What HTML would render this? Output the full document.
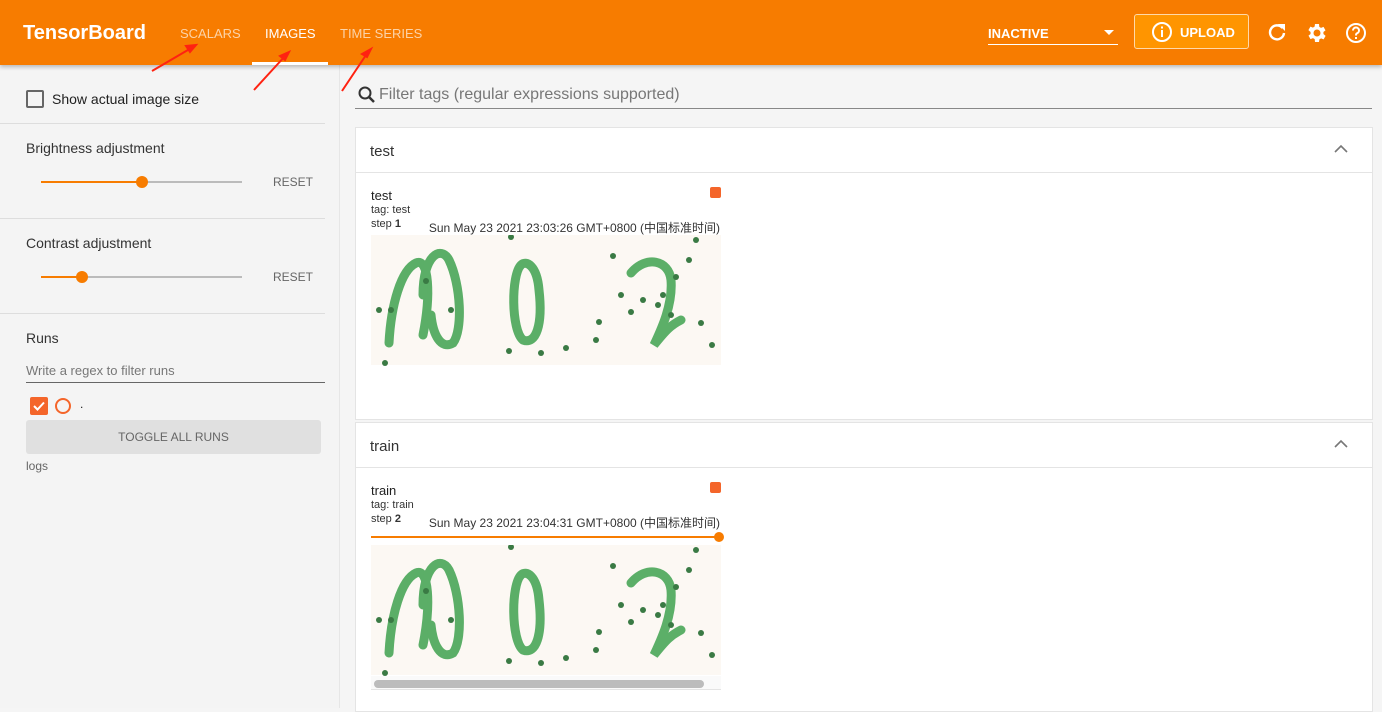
<!DOCTYPE html>
<html><head><meta charset="utf-8"><style>
*{box-sizing:border-box;margin:0;padding:0}
body{width:1382px;height:708px;overflow:hidden;font-family:"Liberation Sans","Noto Sans CJK SC",sans-serif;background:#f5f5f5;color:#212121;position:relative}
.hdr{position:absolute;left:0;top:0;width:1382px;height:65px;background:#f77c00;box-shadow:0 2px 4px rgba(0,0,0,.25);color:#fff;z-index:2}
.abs{position:absolute}
.side{position:absolute;left:0;top:65px;width:340px;height:643px;background:#f4f4f4;border-right:1px solid #e6e6e6}
.hr{position:absolute;left:0;width:325px;height:1px;background:#ddd}
.lbl{font-size:14px;color:#333}
.card{position:absolute;left:355px;width:1018px;background:#fff;border:1px solid #e4e4e4}
.chd{height:45px;border-bottom:1px solid #e4e4e4;font-size:15px;padding:15px 14px;position:relative;color:#333}
.t{font-size:13px}
.s{font-size:11px;color:#333}
.d{font-size:12px;color:#333;white-space:nowrap}
</style></head><body>
<div class="hdr">
 <div class="abs" style="left:23px;top:22px;font-size:20px;font-weight:bold">TensorBoard</div>
 <div class="abs" style="left:180px;top:26px;font-size:13px;color:#fcd3a8">SCALARS</div>
 <div class="abs" style="left:265px;top:26px;font-size:13px">IMAGES</div>
 <div class="abs" style="left:252px;top:62px;width:76px;height:3px;background:#fff"></div>
 <div class="abs" style="left:340px;top:26px;font-size:13px;color:#fcd3a8">TIME SERIES</div>
 <div class="abs" style="left:988px;top:26px;font-size:13px;font-weight:bold">INACTIVE</div>
 <div class="abs" style="left:1104px;top:30px;border-left:5px solid transparent;border-right:5px solid transparent;border-top:5px solid #fff"></div>
 <div class="abs" style="left:988px;top:44px;width:130px;height:1px;background:#fff"></div>
 <div class="abs" style="left:1134px;top:14px;width:115px;height:35px;border:1px solid #ffd9a8;background:#ff9500;border-radius:3px"></div>
 <svg class="abs" style="left:1151px;top:21px" width="22" height="22"><circle cx="11" cy="11" r="9" fill="none" stroke="#fff" stroke-width="2"/><rect x="10" y="9" width="2" height="7" fill="#fff"/><rect x="10" y="5.5" width="2" height="2" fill="#fff"/></svg>
 <div class="abs" style="left:1180px;top:25px;font-size:13px;font-weight:bold">UPLOAD</div>
 <svg class="abs" style="left:1266px;top:21px" width="22" height="22"><path d="M16.5 7A7 7 0 1 0 18 12" fill="none" stroke="#fff" stroke-width="2.4"/><path d="M12 3h7v7z" fill="#fff"/></svg>
 <svg class="abs" style="left:1305px;top:21px" width="24" height="24" viewBox="0 0 24 24"><path fill="#fff" d="M19.4 13a7.5 7.5 0 0 0 0-2l2.1-1.6-2-3.5-2.5 1a7 7 0 0 0-1.7-1L15 3h-4l-.4 2.6a7 7 0 0 0-1.7 1l-2.5-1-2 3.5L6.6 11a7.5 7.5 0 0 0 0 2l-2.1 1.6 2 3.5 2.5-1a7 7 0 0 0 1.7 1L11 21h4l.4-2.6a7 7 0 0 0 1.7-1l2.5 1 2-3.5zM13 15.5a3.5 3.5 0 1 1 0-7 3.5 3.5 0 0 1 0 7z" transform="translate(-1 0)"/></svg>
 <svg class="abs" style="left:1345px;top:22px" width="22" height="22"><circle cx="11" cy="11" r="9" fill="none" stroke="#fff" stroke-width="2"/><path d="M8 8.5a3 3 0 1 1 4 2.8c-1 .4-1 1-1 2.2" fill="none" stroke="#fff" stroke-width="2"/><rect x="10" y="15" width="2" height="2" fill="#fff"/></svg>
</div>
<svg class="abs" style="left:0;top:0;z-index:3" width="460" height="110"><g stroke="#f21" stroke-width="2" fill="#f21"><line x1="152" y1="71" x2="193" y2="47"/><path d="M196 45l-10 1 4 6z"/><line x1="254" y1="90" x2="286" y2="55"/><path d="M289 52l-9 4 5 4z"/><line x1="342" y1="91" x2="368" y2="52"/><path d="M371 49l-9 5 5 3z"/></g></svg>
<div class="side">
 <div class="abs" style="left:26px;top:25px;width:18px;height:18px;border:2px solid #666;border-radius:2px"></div>
 <div class="abs" style="left:52px;top:26px;font-size:14px">Show actual image size</div>
 <div class="hr" style="top:58px"></div>
 <div class="abs lbl" style="left:26px;top:75px">Brightness adjustment</div>
 <div class="abs" style="left:41px;top:116px;width:201px;height:2px;background:#bbb"></div>
 <div class="abs" style="left:41px;top:116px;width:101px;height:2px;background:#f77c00"></div>
 <div class="abs" style="left:136px;top:111px;width:12px;height:12px;border-radius:50%;background:#f77c00"></div>
 <div class="abs" style="left:273px;top:110px;font-size:12px;color:#666">RESET</div>
 <div class="hr" style="top:153px"></div>
 <div class="abs lbl" style="left:26px;top:170px">Contrast adjustment</div>
 <div class="abs" style="left:41px;top:211px;width:201px;height:2px;background:#bbb"></div>
 <div class="abs" style="left:41px;top:211px;width:41px;height:2px;background:#f77c00"></div>
 <div class="abs" style="left:76px;top:206px;width:12px;height:12px;border-radius:50%;background:#f77c00"></div>
 <div class="abs" style="left:273px;top:205px;font-size:12px;color:#666">RESET</div>
 <div class="hr" style="top:248px"></div>
 <div class="abs lbl" style="left:26px;top:265px">Runs</div>
 <div class="abs" style="left:26px;top:298px;font-size:13px;color:#777">Write a regex to filter runs</div>
 <div class="abs" style="left:26px;top:317px;width:299px;height:1px;background:#666"></div>
 <div class="abs" style="left:30px;top:332px;width:18px;height:18px;background:#f4652a;border-radius:2px"><svg width="18" height="18"><path d="M4 9l3.5 3.5L14 5.5" fill="none" stroke="#fff" stroke-width="2"/></svg></div>
 <div class="abs" style="left:55px;top:333px;width:16px;height:16px;border:2px solid #f4652a;border-radius:50%"></div>
 <div class="abs" style="left:80px;top:332px;font-size:12px">.</div>
 <div class="abs" style="left:26px;top:355px;width:295px;height:34px;background:#e0e0e0;border-radius:3px;text-align:center;font-size:12px;color:#666;line-height:34px">TOGGLE ALL RUNS</div>
 <div class="abs" style="left:26px;top:394px;font-size:12px;color:#666">logs</div>
</div>
<svg class="abs" style="left:357px;top:85px" width="20" height="20"><circle cx="8" cy="8" r="5.5" fill="none" stroke="#333" stroke-width="2"/><line x1="12" y1="12" x2="17" y2="17" stroke="#333" stroke-width="2.5"/></svg>
<div class="abs" style="left:379px;top:86px;font-size:16px;color:#777">Filter tags (regular expressions supported)</div>
<div class="abs" style="left:355px;top:108px;width:1017px;height:1px;background:#888"></div>

<svg width="0" height="0" style="position:absolute"><defs>
<g id="img">
<rect width="350" height="130" fill="#fcf8f3"/>
<g fill="none" stroke="#3fa24f" stroke-width="9" stroke-linecap="round" opacity=".85">
<path d="M18 108C20 70 30 35 45 28C58 22 60 60 52 100"/>
<path d="M52 60C52 20 70 10 78 25C90 50 92 95 82 108C70 115 62 100 60 80"/>
<path d="M150 30C140 40 140 95 152 105C165 110 172 90 168 55C166 30 155 25 150 30"/>
<path d="M260 38C275 20 298 25 300 45C302 70 290 95 283 110C295 95 300 90 310 85"/>
</g>
<g fill="#3a7a44">
<circle cx="8" cy="75" r="3"/><circle cx="20" cy="75" r="3"/><circle cx="14" cy="128" r="3"/><circle cx="55" cy="46" r="3"/><circle cx="80" cy="75" r="3"/><circle cx="140" cy="2" r="3"/><circle cx="138" cy="116" r="3"/><circle cx="170" cy="118" r="3"/><circle cx="195" cy="113" r="3"/><circle cx="225" cy="105" r="3"/><circle cx="228" cy="87" r="3"/><circle cx="242" cy="21" r="3"/><circle cx="250" cy="60" r="3"/><circle cx="260" cy="77" r="3"/><circle cx="272" cy="65" r="3"/><circle cx="287" cy="70" r="3"/><circle cx="292" cy="60" r="3"/><circle cx="305" cy="42" r="3"/><circle cx="300" cy="80" r="3"/><circle cx="318" cy="25" r="3"/><circle cx="325" cy="5" r="3"/><circle cx="330" cy="88" r="3"/><circle cx="341" cy="110" r="3"/>
</g></g></defs></svg>

<div class="card" style="top:127px;height:293px">
 <div class="chd">test<svg class="abs" style="right:24px;top:16px" width="14" height="10"><path d="M1 8l6-6 6 6" fill="none" stroke="#777" stroke-width="1.6"/></svg></div>
 <div class="abs t" style="left:15px;top:60px">test</div>
 <div class="abs s" style="left:15px;top:76px">tag: test</div>
 <div class="abs s" style="left:15px;top:90px">step <b>1</b></div>
 <div class="abs d" style="right:652px;top:91px">Sun May 23 2021 23:03:26 GMT+0800 (中国标准时间)</div>
 <div class="abs" style="left:354px;top:59px;width:11px;height:11px;background:#f4652a;border-radius:2px"></div>
 <svg class="abs" style="left:15px;top:107px" width="350" height="131"><use href="#img"/></svg>
</div>
<div class="card" style="top:422px;height:290px">
 <div class="chd">train<svg class="abs" style="right:24px;top:16px" width="14" height="10"><path d="M1 8l6-6 6 6" fill="none" stroke="#777" stroke-width="1.6"/></svg></div>
 <div class="abs t" style="left:15px;top:60px">train</div>
 <div class="abs s" style="left:15px;top:76px">tag: train</div>
 <div class="abs s" style="left:15px;top:90px">step <b>2</b></div>
 <div class="abs d" style="right:652px;top:91px">Sun May 23 2021 23:04:31 GMT+0800 (中国标准时间)</div>
 <div class="abs" style="left:354px;top:59px;width:11px;height:11px;background:#f4652a;border-radius:2px"></div>
 <div class="abs" style="left:15px;top:113px;width:350px;height:2px;background:#f77c00"></div>
 <div class="abs" style="left:358px;top:109px;width:10px;height:10px;border-radius:50%;background:#f77c00"></div>
 <svg class="abs" style="left:15px;top:122px" width="350" height="131"><use href="#img"/></svg>
 <div class="abs" style="left:15px;top:253px;width:350px;height:14px;background:#fafafa;border-bottom:1px solid #e4e4e4"></div>
 <div class="abs" style="left:18px;top:257px;width:330px;height:8px;background:#bcbcbc;border-radius:4px"></div>
</div>
</body></html>
